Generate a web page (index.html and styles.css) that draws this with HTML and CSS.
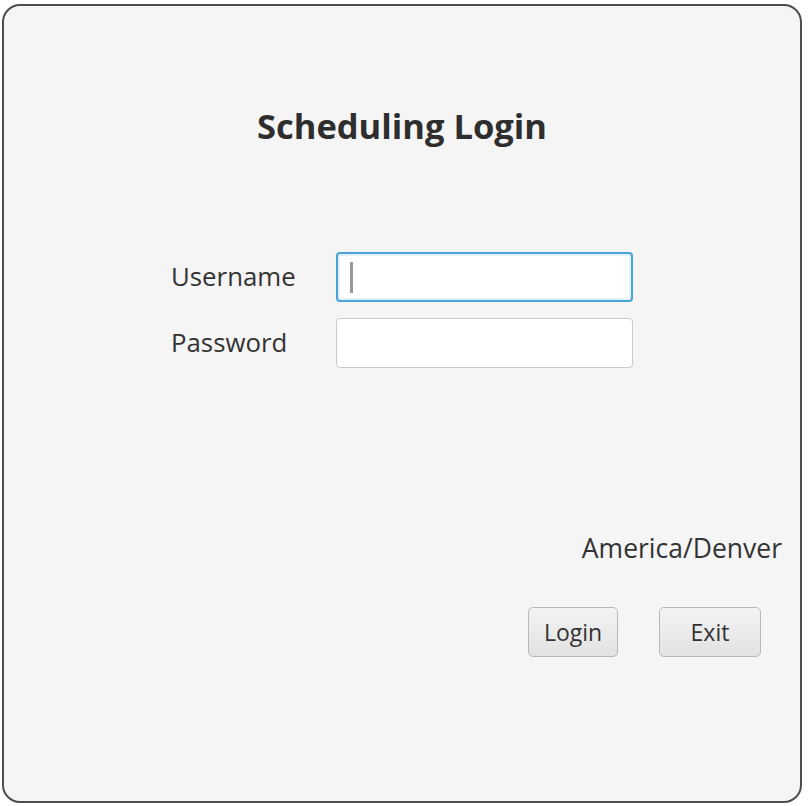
FILE: index.html
```html
<!DOCTYPE html>
<html lang="en">
<head>
<meta charset="utf-8">
<title>Scheduling Login</title>
<link rel="stylesheet" href="styles.css">
</head>
<body>
<div class="window">
  <h1 class="title">Scheduling Login</h1>
  <div class="form">
    <label class="label">Username</label>
    <div class="field focused"><span class="caret"></span></div>
    <label class="label">Password</label>
    <div class="field"></div>
  </div>
  <div class="zone">America/Denver</div>
  <div class="actions">
    <button class="btn login">Login</button>
    <button class="btn exit">Exit</button>
  </div>
</div>
</body>
</html>
```

FILE: styles.css
```css
html, body {
  margin: 0;
  padding: 0;
  background: #ffffff;
}
body {
  font-family: "Open Sans", "Noto Sans", sans-serif;
  color: #333333;
}
.window {
  box-sizing: border-box;
  width: 800px;
  height: 799px;
  margin: 4px 0 0 2px;
  border: 2px solid #4d4d4d;
  border-radius: 18px;
  background: #f5f5f5;
  display: flex;
  flex-direction: column;
}
.title {
  margin: 95px 0 0 0;
  text-align: center;
  font-size: 34.5px;
  font-weight: 700;
  line-height: 50px;
  color: #2e2e2e;
}
.form {
  margin: 101px 0 0 167px;
  display: grid;
  grid-template-columns: 165px 297px;
  grid-auto-rows: 50px;
  row-gap: 16px;
  align-items: center;
}
.label {
  font-size: 25.8px;
  line-height: 30px;
  color: #333;
  margin-top: -3px;
}
.field {
  box-sizing: border-box;
  height: 50px;
  background: #ffffff;
  border: 1px solid #c9c9c9;
  border-radius: 4px;
  display: flex;
  align-items: center;
  padding-left: 13px;
}
.field.focused {
  border: 2px solid #4aa3d8;
  box-shadow: inset 0 0 0 2px #e3f1fb;
  padding-left: 12px;
}
.caret {
  display: inline-block;
  width: 3px;
  height: 31px;
  background: #9a9a9a;
}
.zone {
  margin-top: 163px;
  padding-right: 18px;
  text-align: right;
  font-size: 26.5px;
  line-height: 34px;
}
.actions {
  margin-top: 42px;
  display: flex;
  justify-content: flex-end;
  gap: 41px;
  padding-right: 39px;
}
.btn {
  box-sizing: border-box;
  height: 50px;
  border: 1px solid #b8b8b8;
  border-radius: 5px;
  background: linear-gradient(#f3f3f3, #e2e2e2);
  font-family: "Open Sans", "Noto Sans", sans-serif;
  font-size: 23px;
  color: #333;
  padding: 0;
}
.btn.login { width: 90px; }
.btn.exit { width: 102px; }
```
